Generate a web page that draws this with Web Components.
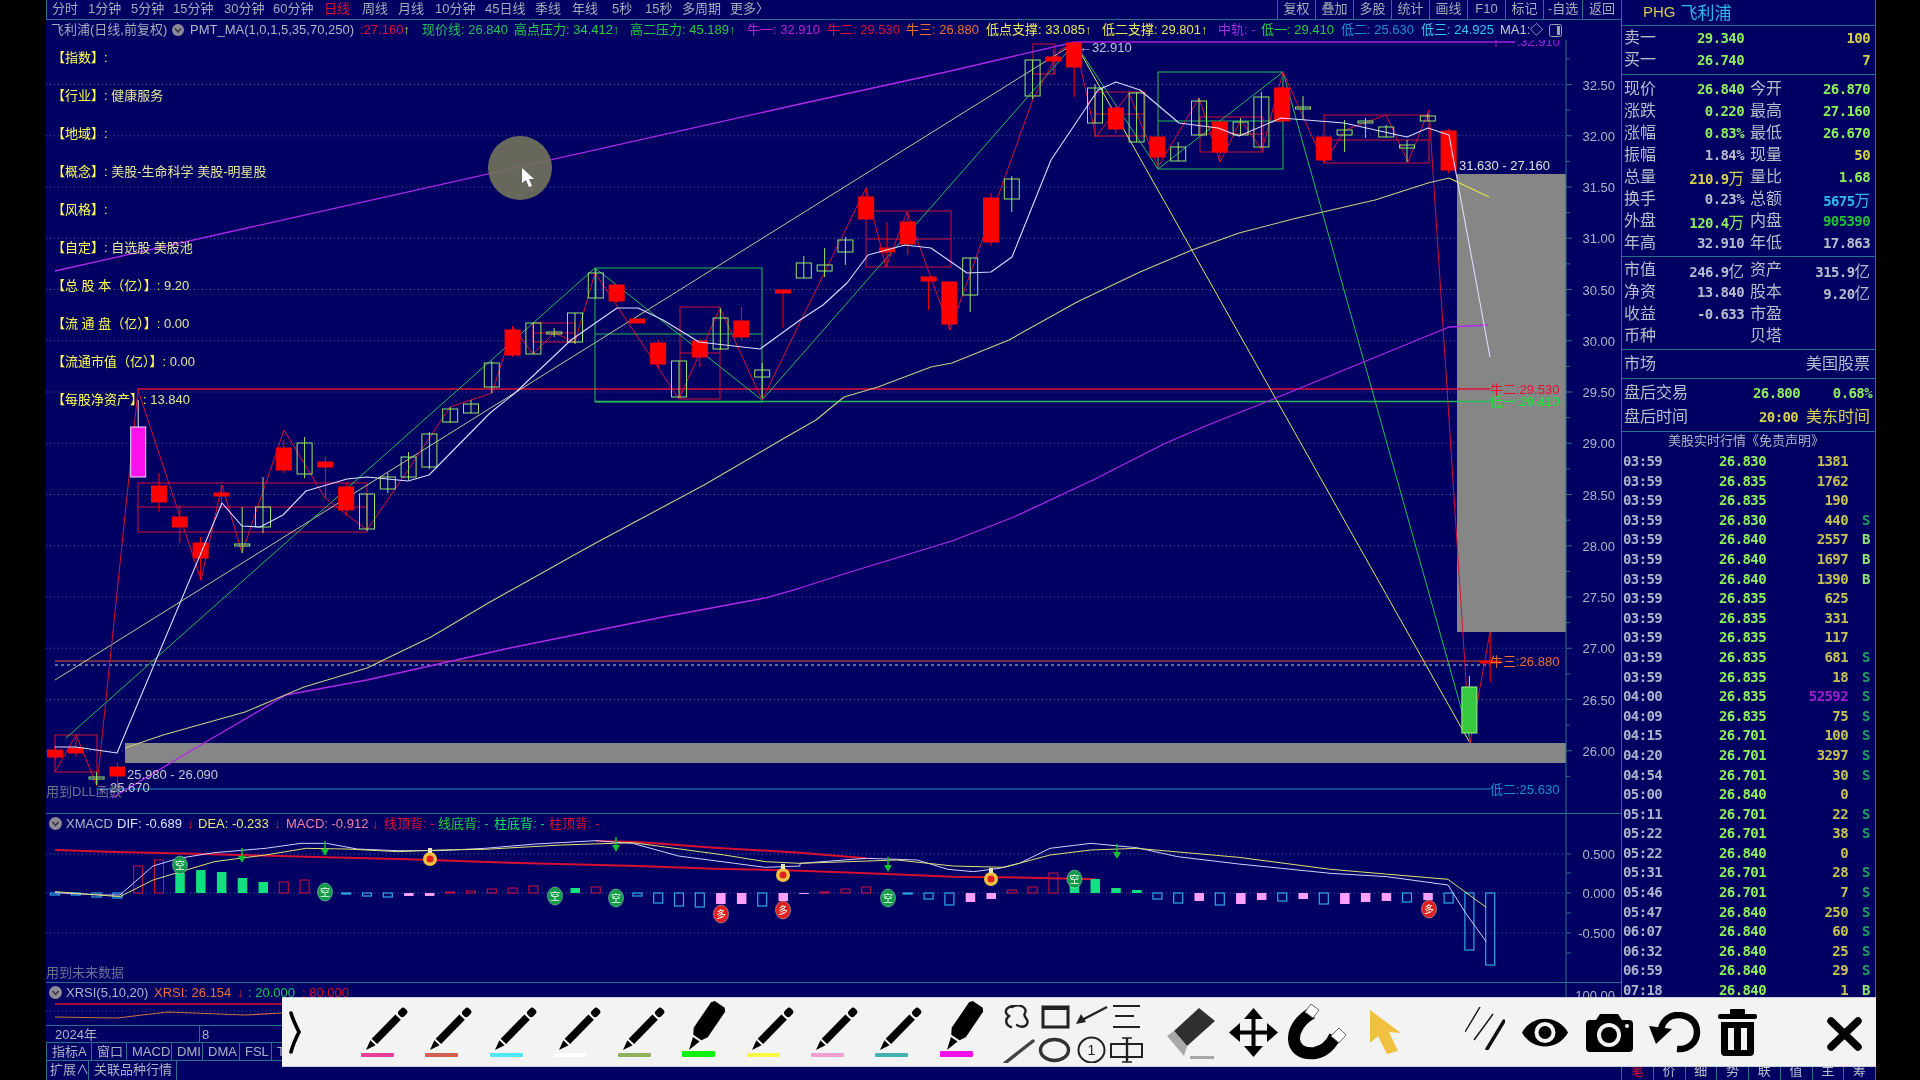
<!DOCTYPE html>
<html lang="zh">
<head>
<meta charset="utf-8">
<title>PHG</title>
<style>
  html, body { margin: 0; background: #000; overflow: hidden; }
</style>
</head>
<body>
<stock-app></stock-app>

<script>
const NAVY = '#000062';
const LINE = '#2c6e8e';
const UI_FONT = '"Liberation Sans", "Noto Sans CJK SC", sans-serif';
const NUM_FONT = '"DejaVu Sans Mono", "Noto Sans CJK SC", monospace';

// chart helpers, everything is in page coordinates
const priceY = p => 84.5 + (32.5 - p) * 102.5;
const candleX = i => 55 + 20.8 * i;
const line = (pts, color, w = 1) =>
  `<polyline fill="none" stroke="${color}" stroke-width="${w}" stroke-linejoin="round" points="${pts.map(p => p.join(',')).join(' ')}"/>`;
const box = (x1, y1, x2, y2, color, mid) =>
  `<rect x="${x1}" y="${y1}" width="${x2 - x1}" height="${y2 - y1}" fill="none" stroke="${color}"/>` +
  (mid ? `<line x1="${x1}" x2="${x2}" y1="${mid}" y2="${mid}" stroke="${color}"/>` : '');
const label = (x, y, text, color, anchor = 'start', size = 13) =>
  `<text x="${x}" y="${y}" fill="${color}" text-anchor="${anchor}" font-size="${size}">${text}</text>`;
const dotted = (y, x2 = 1566) =>
  `<line x1="46" x2="${x2}" y1="${y}" y2="${y}" stroke="#46609c" stroke-dasharray="1 3"/>`;

class BarItem extends HTMLElement {
  constructor() {
    super();
    this.attachShadow({ mode: 'open' }).innerHTML = `
      <style>
        :host { display: block; flex: 0 0 auto; white-space: nowrap; box-sizing: border-box; }
        :host([btn]) { border-left: 1px solid ${LINE}; text-align: center; height: 19px; }
        :host([tab]) { border-right: 1px solid ${LINE}; padding-left: 5px; overflow: hidden; }
      </style>
      <slot></slot>`;
  }
  connectedCallback() {
    if (this.hasAttribute('w')) this.style.width = this.getAttribute('w') + 'px';
  }
}
customElements.define('bar-item', BarItem);

class TopBar extends HTMLElement {
  constructor() {
    super();
    const left = [['分时', 36], ['1分钟', 43], ['5分钟', 42], ['15分钟', 51], ['30分钟', 49], ['60分钟', 51],
      ['日线', 38, '#e01030'], ['周线', 36], ['月线', 37], ['10分钟', 50], ['45日线', 50], ['季线', 37],
      ['年线', 40], ['5秒', 33], ['15秒', 37], ['多周期', 48], ['更多〉', 60]];
    const right = [['复权', 38], ['叠加', 38], ['多股', 38], ['统计', 38], ['画线', 38], ['F10', 38], ['标记', 38], ['-自选', 39], ['返回', 39]];
    this.attachShadow({ mode: 'open' }).innerHTML = `
      <style>
        :host { display: flex; height: 20px; box-sizing: border-box; padding-left: 5px; line-height: 18px;
                border-bottom: 1px solid ${LINE}; border-left: 1px solid ${LINE}; color: #a9a9bc; }
        .right { display: flex; margin-left: auto; }
      </style>
      ${left.map(([t, w, c]) => `<bar-item w="${w}"${c ? ` style="color:${c}"` : ''}>${t}</bar-item>`).join('')}
      <div class="right">${right.map(([t, w]) => `<bar-item btn w="${w}">${t}</bar-item>`).join('')}</div>`;
  }
}
customElements.define('top-bar', TopBar);

class LegendBar extends HTMLElement {
  constructor() {
    super();
    const items = [
      ['飞利浦(日线,前复权)', 121, '#a9a9bc'], ['@', 18], ['PMT_MA(1,0,1,5,35,70,250)', 170, '#b4b4c8'],
      [':27.160<b>↑</b>', 62, '#e01030'], ['现价线: 26.840', 92, '#20c060'], ['高点压力: 34.412↑', 116, '#22cc44'],
      ['高二压力: 45.189↑', 117, '#22cc44'], ['牛一: 32.910', 80, '#c020d0'], ['牛二: 29.530', 79, '#e01030'],
      ['牛三: 26.880', 80, '#e87030'], ['低点支撑: 33.085↑', 116, '#e8e850'], ['低二支撑: 29.801↑', 116, '#e8e850'],
      ['中轨: -', 43, '#a030e0'], ['低一: 29.410', 80, '#20d040'], ['低二: 25.630', 80, '#1890d0'],
      ['低三: 24.925', 79, '#30c8f0'], ['MA1:', 30, '#c8c8d8'], ['◇', 19, '#b4b4c8'], ['#', 14]
    ];
    this.attachShadow({ mode: 'open' }).innerHTML = `
      <style>
        :host { display: flex; height: 20px; padding-left: 5px; line-height: 20px; align-items: center; }
        b { font-weight: normal; color: #d8f040; }
        svg { display: block; }
      </style>
      ${items.map(([t, w, c]) => {
        if (t === '@') return `<bar-item w="${w}"><svg width="12" height="12" viewBox="0 0 12 12"><circle cx="6" cy="6" r="6" fill="#8a8a98"/><path d="M3 4.5 6 8 9 4.5" fill="none" stroke="#333" stroke-width="1.4"/></svg></bar-item>`;
        if (t === '#') return `<bar-item w="${w}"><svg width="13" height="13" viewBox="0 0 13 13"><rect x=".5" y=".5" width="12" height="12" rx="2" fill="none" stroke="#a0a0b0"/><rect x="8" y="2" width="3" height="9" fill="#a0a0b0"/></svg></bar-item>`;
        return `<bar-item w="${w}" style="color:${c}">${t}</bar-item>`;
      }).join('')}`;
  }
}
customElements.define('legend-bar', LegendBar);

class StockInfo extends HTMLElement {
  constructor() {
    super();
    const rows = [
      ['【指数】', ':'], ['【行业】', ': <i>健康服务</i>'], ['【地域】', ':'], ['【概念】', ': <i>美股-生命科学 美股-明星股</i>'],
      ['【风格】', ':'], ['【自定】', ': <i>自选股 美股池</i>'], ['【总 股 本（亿）】', ': <i>9.20</i>'],
      ['【流 通 盘（亿）】', ': <i>0.00</i>'], ['【流通市值（亿）】', ': <i>0.00</i>'], ['【每股净资产】', ': <i>13.840</i>']
    ];
    this.attachShadow({ mode: 'open' }).innerHTML = `
      <style>
        :host { position: absolute; left: 6px; top: -1px; display: flex; flex-direction: column; color: #ffff50; }
        div { height: 38px; line-height: 38px; white-space: pre; }
        i { font-style: normal; color: #e4e49a; }
      </style>
      ${rows.map(([a, b]) => `<div>${a}${b}</div>`).join('')}`;
  }
}
customElements.define('stock-info', StockInfo);

class KlinePane extends HTMLElement {
  constructor() {
    super();
    // [index, kind, top, bottom, high, low]   r red, g hollow, m magenta, f filled green
    const candles = [
      [0,'r',750,757,746,760],[1,'r',748,753,738,757],[2,'g',777,779,772,785],[3,'r',767,776,763,787],[4,'m',427,477,400,477],
      [5,'r',486,502,473,512],[6,'r',517,527,505,543],[7,'r',543,558,537,580],[8,'r',493,496,485,507],[9,'g',544,546,507,553],
      [10,'g',507,527,477,533],[11,'r',448,470,440,473],[12,'g',443,474,437,478],[13,'r',462,467,457,498],[14,'r',487,510,483,516],
      [15,'g',494,529,494,531],[16,'g',477,489,473,493],[17,'g',457,477,452,480],[18,'g',434,467,432,469],[19,'g',409,422,407,423],
      [20,'g',404,413,400,413],[21,'g',363,387,361,393],[22,'r',330,355,326,357],[23,'g',323,354,323,354],[24,'g',332,334,328,337],
      [25,'g',313,342,313,344],[26,'g',273,298,269,298],[27,'r',285,301,285,303],[28,'r',319,323,319,323],[29,'r',343,364,340,368],
      [30,'g',361,397,361,397],[31,'r',341,357,338,367],[32,'g',318,349,308,350],[33,'r',321,337,307,340],[34,'g',370,377,363,398],
      [35,'r',290,293,289,328],[36,'g',263,278,256,278],[37,'g',265,271,248,277],[38,'g',240,252,237,265],[39,'r',197,219,188,220],
      [40,'r',248,252,222,267],[41,'r',222,244,212,255],[42,'r',277,281,277,310],[43,'r',282,324,282,330],[44,'g',258,295,258,312],
      [45,'r',198,242,193,246],[46,'g',179,199,176,212],[47,'g',60,96,60,99],[48,'r',57,61,50,74],[49,'r',43,67,42,97],
      [50,'g',88,123,84,123],[51,'r',108,129,105,134],[52,'g',93,142,92,142],[53,'r',137,157,137,159],[54,'g',147,161,142,161],
      [55,'g',101,135,98,135],[56,'r',122,152,122,162],[57,'g',122,135,118,135],[58,'g',97,147,92,147],[59,'r',88,121,86,121],
      [60,'g',107,109,96,120],[61,'r',137,160,137,163],[62,'g',130,135,120,152],[63,'g',121,123,118,138],[64,'g',127,137,125,137],
      [65,'g',145,148,140,162],[66,'g',116,121,114,121],[67,'r',131,170,129,173],[68,'f',687,733,676,733],[69,'r',661,663,632,682]
    ];
    const bars = candles.map(([i, kind, top, bot, hi, lo]) => {
      const x = candleX(i);
      const color = { r: '#ff0000', g: '#98e868', m: '#e8e8f0', f: '#a0f090' }[kind];
      const fill = { r: '#ff0000', g: 'none', m: '#ff10ee', f: '#38c840' }[kind];
      const hw = i === 69 ? 10 : 7.5;
      return `<line x1="${x}" x2="${x}" y1="${hi}" y2="${lo}" stroke="${color}"/>` +
        `<rect x="${x - hw}" y="${top}" width="${hw * 2}" height="${bot - top}" fill="${fill}" stroke="${color}"/>`;
    }).join('');

    let grid = '';
    for (let p = 26; p <= 32.5; p += 0.5) grid += dotted(priceY(p));
    let axis = `<line x1="1566" x2="1566" y1="40" y2="813" stroke="${LINE}"/>`;
    for (let p = 25.75; p <= 32.75; p += 0.25) {
      axis += `<line x1="1566" x2="${p * 2 % 1 ? 1570 : 1572}" y1="${priceY(p)}" y2="${priceY(p)}" stroke="${LINE}"/>`;
    }
    for (let p = 26; p <= 32.5; p += 0.5) axis += label(1615, priceY(p) + 5, p.toFixed(2), '#b0b4c8', 'end');

    const redBoxes = [[55,735,97,772],[138,483,367,532,507],[533,323,575,342,333],[680,307,720,399,353],
      [866,211,951,267,239],[1033,44,1055,74],[1095,92,1145,136,114],[1200,117,1263,152,134],[1324,115,1429,163,140]];
    const red = '#d41038', green = '#24bc58';

    this.attachShadow({ mode: 'open' }).innerHTML = `
      <style>
        :host { display: block; position: relative; height: 773px; overflow: hidden; }
        svg { position: absolute; inset: 0; display: block; font-family: ${UI_FONT}; }
      </style>
      <svg width="1575" height="773" viewBox="46 40 1575 773">
        ${grid}
        <rect x="1457" y="174" width="109" height="458" fill="#868686"/>
        <rect x="125" y="743" width="1441" height="20" fill="#868686"/>
        ${axis}
        <line x1="137" x2="1490" y1="389" y2="389" stroke="#e01038" stroke-width="1.3"/>
        <line x1="595" x2="1490" y1="401.5" y2="401.5" stroke="${green}" stroke-width="1.3"/>
        <line x1="55" x2="1490" y1="661" y2="661" stroke="#e05a30"/>
        <line x1="55" x2="1490" y1="665" y2="665" stroke="#a0e8e0" stroke-dasharray="3 3"/>
        <line x1="97" x2="1490" y1="789" y2="789" stroke="#1e90d0" stroke-width="1.2"/>
        <line x1="1075" x2="1515" y1="42" y2="42" stroke="#a820e0" stroke-width="1.4"/>
        <line x1="1496" x2="1496" y1="40" y2="47" stroke="#a820e0"/>
        ${redBoxes.map(b => box(b[0], b[1], b[2], b[3], red, b[4])).join('')}
        ${box(595, 268, 762, 402, green, 334)}
        ${box(1158, 72, 1283, 169, green, 121)}
        ${line([[55,680],[1075,43]], '#c8c890')}
        ${line([[1075,43],[1470,743]], '#e4e460')}
        ${line([[66,738],[595,268],[762,400],[1075,43],[1158,169],[1283,72],[1470,740]], green)}
        ${line([[55,772],[76,735],[97,786],[138,390],[201,580],[222,485],[242,553],[284,430],[325,498],[367,530],[408,470],[450,407],[492,393],[513,327],[533,354],[554,333],[575,342],[595,273],[679,399],[720,308],[762,400],[866,188],[886,267],[907,212],[950,330],[1033,99],[1060,50],[1075,42],[1096,137],[1129,93],[1158,167],[1199,98],[1220,162],[1241,120],[1262,150],[1283,72],[1324,163],[1345,130],[1386,115],[1408,162],[1429,110],[1470,743],[1490,632]], red)}
        ${line([[55,271],[800,104],[946,72],[1075,42]], '#b028e8', 1.3)}
        ${line([[112,798],[204,743],[286,695],[367,680],[510,648],[663,617],[765,598],[800,588],[847,573],[952,541],[1014,517],[1093,480],[1166,443],[1208,425],[1271,400],[1449,327],[1488,325]], '#b028e8', 1.3)}
        ${line([[125,748],[163,735],[245,712],[304,687],[367,668],[431,637],[490,602],[592,545],[704,485],[781,440],[816,420],[844,397],[878,387],[931,367],[952,363],[1009,340],[1077,302],[1140,272],[1192,250],[1239,233],[1297,218],[1375,200],[1428,183],[1449,178]], '#cccc80', 1.1)}
        ${line([[1449,178],[1489,197]], '#e4e440', 1.1)}
        ${bars}
        ${line([[55,747],[76,747],[117,753],[222,503],[242,526],[260,527],[283,515],[306,491],[347,479],[367,477],[408,481],[429,475],[490,413],[515,393],[571,340],[617,308],[638,308],[663,320],[699,342],[760,349],[800,320],[823,305],[847,283],[868,255],[905,245],[931,248],[967,273],[991,272],[1012,257],[1051,160],[1098,90],[1116,82],[1140,90],[1179,123],[1218,128],[1239,136],[1281,118],[1344,123],[1407,137],[1428,128],[1449,135],[1490,357]], '#dcdcff', 1.1)}
        ${label(1079, 52, '←32.910', '#c0c0d0')}
        ${label(1459, 170, '31.630 - 27.160', '#e0e0e0')}
        ${label(127, 779, '25.980 - 26.090', '#c8c8d8')}
        ${label(97, 792, '←25.670', '#c8c8d8')}
        ${label(46, 796, '用到DLL函数', '#6c7090')}
        ${label(1560, 46, '.32.910', '#a820e0', 'end')}
        ${label(1490, 394, '牛二:29.530', '#e81030')}
        ${label(1490, 406, '低一:29.410', '#10f030')}
        ${label(1490, 666, '牛三:26.880', '#e87030')}
        ${label(1490, 794, '低二:25.630', '#1890d0')}
        <circle cx="520" cy="168" r="32" fill="#72725c" opacity=".9"/>
        <polygon points="522,168 522,183 526,180 529,187 532,186 529,179 534,179" fill="#fff"/>
      </svg>
      <stock-info></stock-info>`;
  }
}
customElements.define('kline-pane', KlinePane);

class PaneHeader extends HTMLElement {
  constructor() {
    super();
    this.attachShadow({ mode: 'open' }).innerHTML = `
      <style>
        :host { display: flex; position: relative; height: 19px; align-items: center; padding-left: 3px; line-height: 19px; }
        svg { display: block; margin-right: 4px; flex: none; }
      </style>
      <svg width="13" height="13" viewBox="0 0 13 13"><circle cx="6.5" cy="6.5" r="6.5" fill="#8a8a98"/><path d="M3.5 5 6.5 8.5 9.5 5" fill="none" stroke="#333" stroke-width="1.4"/></svg>
      <slot></slot>`;
  }
}
customElements.define('pane-header', PaneHeader);

class MacdPane extends HTMLElement {
  constructor() {
    super();
    const pts = (a, ox = 0) => a.map(([x, y]) => [x / 1.96 + ox, y / 3 + 780]);
    const seq = 'c2 c2 c4 c5 r27 r33 g20 g23 g21 g15 g11 r11 r13 - c1 c3 c4 p3 p3 r1 r2 r4 r5 r7 - g5 r6 - c3 c10 c13 c14 p11 p11 c13 p8 p1 r1 r4 r6 - c1 c6 c12 p9 p6 r3 r6 r20 g7 g14 g5 g3 c6 c10 p8 c12 p11 p7 c8 p6 c11 p11 p9 p8 c9 p7 c10 c57 c72'.split(' ');
    const zero = 893;
    const bars = seq.map((s, i) => {
      if (s === '-') return '';
      const kind = s[0], h = +s.slice(1), x = candleX(i) - 4.5;
      if (kind === 'g') return `<rect x="${x}" y="${zero - h}" width="9.5" height="${h}" fill="#10e080"/>`;
      if (kind === 'r') return `<rect x="${x}" y="${zero - h}" width="9" height="${h}" fill="none" stroke="#d01040"/>`;
      if (kind === 'p') return `<rect x="${x}" y="${zero}" width="9.5" height="${h}" fill="#ffa0ff"/>`;
      return `<rect x="${x}" y="${zero}" width="9" height="${h}" fill="none" stroke="#30a8e8" stroke-width="1.2"/>`;
    }).join('');

    const marker = (x, y, text, fill) =>
      `<ellipse cx="${x}" cy="${y}" rx="7.5" ry="9" fill="${fill}" stroke="#e8ffe8" stroke-width=".4"/>` +
      `<text x="${x}" y="${y + 3.5}" font-size="10" text-anchor="middle" fill="#f4fff4">${text}</text>`;
    const arrow = (x, y) =>
      `<line x1="${x}" x2="${x}" y1="${y - 7}" y2="${y + 4}" stroke="#10c030" stroke-width="1.5"/>` +
      `<polygon points="${x - 4},${y + 1} ${x + 4},${y + 1} ${x},${y + 8}" fill="#10c030"/>`;
    const bag = (x, y) =>
      `<ellipse cx="${x}" cy="${y + 2}" rx="7" ry="7" fill="#f0c040"/>` +
      `<rect x="${x - 2}" y="${y - 9}" width="4" height="5" fill="#e8e0c0"/>` +
      `<circle cx="${x}" cy="${y + 2}" r="3.5" fill="#e02020"/>`;

    this.attachShadow({ mode: 'open' }).innerHTML = `
      <style>
        :host { display: block; position: relative; height: 169px; box-sizing: border-box; border-top: 1px solid ${LINE}; overflow: hidden; }
        svg { position: absolute; inset: 0; display: block; font-family: ${UI_FONT}; }
        .tip { position: absolute; left: 0; bottom: 1px; color: #6c7090; }
      </style>
      <svg width="1575" height="168" viewBox="46 814 1575 168">
        ${dotted(854)}${dotted(893)}${dotted(933)}
        <line x1="1566" x2="1566" y1="814" y2="982" stroke="${LINE}"/>
        ${[854, 873, 893, 913, 933, 953].map(y => `<line x1="1566" x2="1571" y1="${y}" y2="${y}" stroke="${LINE}"/>`).join('')}
        ${label(1615, 859, '0.500', '#b0b4c8', 'end')}${label(1615, 898, '0.000', '#b0b4c8', 'end')}${label(1615, 938, '-0.500', '#b0b4c8', 'end')}
        ${line(pts([[108,210],[230,216],[400,222],[600,230],[800,238],[1000,248],[1250,258],[1400,266],[1568,272]]).concat(pts([[0,272],[170,282],[300,290],[450,293],[580,298]], 800)), '#d81030', 2)}
        ${line(pts([[1168,183],[1250,186],[1400,203],[1568,218]]).concat(pts([[0,218],[130,235]], 800)), '#d81030', 2)}
        ${bars}
        ${line(pts([[108,338],[200,345],[235,345],[300,258],[350,235],[420,218],[520,205],[590,190],[640,190],[700,207],[780,212],[860,212],[950,205],[1050,192],[1168,182],[1240,190],[1330,228],[1500,262],[1568,258]]).concat(pts([[0,250],[130,235],[230,240],[290,268],[340,275],[390,265],[430,250],[490,205],[570,190],[660,203],[740,230],[860,252],[1040,280],[1150,290],[1270,315],[1305,400],[1345,485]], 800)), '#d0d0ff', 1)}
        ${line(pts([[108,335],[235,350],[300,300],[420,245],[520,225],[600,205],[680,207],[780,215],[860,210],[950,208],[1100,195],[1240,188],[1420,225],[1500,245],[1568,250]]).concat(pts([[0,250],[190,240],[300,258],[400,262],[490,225],[570,210],[660,205],[860,232],[1040,268],[1270,298],[1345,382]], 800)), '#e0e070', 1)}
        ${[[242,855],[325,848],[616,844],[888,864],[1117,851]].map(a => arrow(a[0], a[1])).join('')}
        ${[[180,865],[325,892],[555,896],[616,898],[888,898],[1074.5,879]].map(m => marker(m[0], m[1], '空', '#109a4a')).join('')}
        ${[[721,914],[783,910],[1429,909]].map(m => marker(m[0], m[1], '多', '#e02020')).join('')}
        ${[[430,857],[783,873],[991,877]].map(m => bag(m[0], m[1])).join('')}
      </svg>
      <pane-header>
        <bar-item w="51" style="color:#b4b4c8">XMACD</bar-item>
        <bar-item w="70" style="color:#e0e0ff">DIF: -0.689</bar-item><bar-item w="11" style="color:#e02030">↓</bar-item>
        <bar-item w="76" style="color:#e8e870">DEA: -0.233</bar-item><bar-item w="12" style="color:#e02030">↓</bar-item>
        <bar-item w="86" style="color:#f080a8">MACD: -0.912</bar-item><bar-item w="12" style="color:#e02030">↓</bar-item>
        <bar-item w="54" style="color:#e01030">线顶背: -</bar-item><bar-item w="56" style="color:#20d040">线底背: -</bar-item>
        <bar-item w="55" style="color:#10e060">柱底背: -</bar-item><bar-item w="54" style="color:#e01030">柱顶背: -</bar-item>
      </pane-header>
      <div class="tip">用到未来数据</div>`;
  }
}
customElements.define('macd-pane', MacdPane);

class RsiPane extends HTMLElement {
  constructor() {
    super();
    this.attachShadow({ mode: 'open' }).innerHTML = `
      <style>
        :host { display: block; position: relative; height: 43px; box-sizing: border-box; border-top: 1px solid ${LINE}; overflow: hidden; }
        svg { position: absolute; inset: 0; display: block; font-family: ${UI_FONT}; }
      </style>
      <svg width="1575" height="42" viewBox="46 983 1575 42">
        <line x1="55" x2="1566" y1="1004" y2="1004" stroke="#d81030" stroke-width="1.3"/>
        ${line([[55,1017],[117,1018],[168,1012],[245,1015],[282,1013]], '#c87040', 1.2)}
        <line x1="46" x2="1566" y1="1011" y2="1011" stroke="#46609c" stroke-dasharray="1 3"/>
        <line x1="1566" x2="1566" y1="983" y2="1025" stroke="${LINE}"/>
        ${label(1615, 1000, '100.00', '#b0b4c8', 'end')}
      </svg>
      <pane-header>
        <bar-item w="88" style="color:#b4b4c8">XRSI(5,10,20)</bar-item>
        <bar-item w="83" style="color:#e87040">XRSI: 26.154</bar-item><bar-item w="11" style="color:#e02030">↓</bar-item>
        <bar-item w="54" style="color:#20c060">: 20.000</bar-item><bar-item style="color:#d01030">: 80.000</bar-item>
      </pane-header>`;
  }
}
customElements.define('rsi-pane', RsiPane);

class TabRow extends HTMLElement {
  constructor() {
    super();
    this.attachShadow({ mode: 'open' }).innerHTML = `
      <style>
        :host { display: flex; box-sizing: border-box; height: 18px; line-height: 17px; color: #b0b0c4;
                border-bottom: 1px solid ${LINE}; border-left: 1px solid ${LINE}; }
      </style>
      <slot></slot>`;
  }
}
customElements.define('tab-row', TabRow);

class QuotePanel extends HTMLElement {
  constructor() {
    super();
    const G = '#8cf05c', Y = '#d8d050', W = '#b8bccc', C = '#30b8f0', D = '#22c038';
    const unit = (v, u) => `${v}<u>${u}</u>`;
    const rows = list => list.map(([a, v, ac, b, w, bc]) => `<div class="row">
        <span class="lb">${a}</span><span class="val" style="color:${ac}">${v}</span>
        <span class="lb two">${b}</span><span class="val" style="color:${bc}">${w}</span></div>`).join('');
    const main = [
      ['现价', '26.840', G, '今开', '26.870', G], ['涨跌', '0.220', G, '最高', '27.160', G],
      ['涨幅', '0.83%', G, '最低', '26.670', G], ['振幅', '1.84%', W, '现量', '50', Y],
      ['总量', unit('210.9', '万'), Y, '量比', '1.68', G], ['换手', '0.23%', W, '总额', unit('5675', '万'), C],
      ['外盘', unit('120.4', '万'), G, '内盘', '905390', D], ['年高', '32.910', W, '年低', '17.863', W]
    ];
    const fund = [
      ['市值', unit('246.9', '亿'), W, '资产', unit('315.9', '亿'), W], ['净资', '13.840', W, '股本', unit('9.20', '亿'), W],
      ['收益', '-0.633', W, '市盈', '', W], ['币种', '', W, '贝塔', '', W]
    ];
    const tabs = ['笔', '价', '细', '势', '联', '值', '主', '筹'];
    this.attachShadow({ mode: 'open' }).innerHTML = `
      <style>
        :host { display: flex; flex-direction: column; height: 1080px; box-sizing: border-box; overflow: hidden;
                border-left: 1px solid ${LINE}; border-right: 1px solid ${LINE}; color: ${W}; }
        section { border-bottom: 1px solid ${LINE}; padding: 0 5px 0 2px; }
        .head { height: 25px; box-sizing: content-box; display: flex; align-items: center; padding: 0 0 3px 21px; height: 22px; font-size: 17px; gap: 5px; }
        .head b { color: #d8c850; font-weight: normal; font-size: 15px; font-family: ${UI_FONT}; }
        .head em { color: #30b8f0; font-style: normal; }
        .row { display: grid; grid-template-columns: 34px 86px 40px 86px; height: 22px; line-height: 22px; align-items: center; }
        .lb { font-size: 16px; white-space: nowrap; }
        .two { padding-left: 6px; }
        .val { font: bold 14px ${NUM_FONT}; letter-spacing: -.6px; text-align: right; white-space: nowrap; }
        u { text-decoration: none; font: 15.5px ${UI_FONT}; letter-spacing: 0; }
        .quote { height: 49px; padding-top: 1px; box-sizing: border-box; }
        .s2 { height: 182px; padding-top: 3px; box-sizing: border-box; }
        .s3 { height: 93px; padding-top: 2px; box-sizing: border-box; }
        .s4 { height: 29px; box-sizing: border-box; display: flex; justify-content: space-between; line-height: 28px; font-size: 16px; }
        .s5 { height: 53px; padding-top: 2px; box-sizing: border-box; }
        .s5 div { display: flex; height: 24px; line-height: 24px; font-size: 16px; position: relative; }
        .s5 .val { position: absolute; top: 0; line-height: 24px; }
        .cap { text-align: center; border: 0; line-height: 18px; height: 19px; color: #b0b0c4; padding-left: 0; flex: none; }
        trade-list { flex: 1; min-height: 0; }
        .tabs { display: flex; height: 18px; line-height: 18px; border-top: 1px solid ${LINE}; flex: none; margin-top: auto; }
        .tabs span { flex: 1; text-align: center; border-right: 1px solid ${LINE}; }
        .tabs span:last-child { border: 0; }
        .tabs span:first-child { color: #e01030; }
      </style>
      <section class="head"><b>PHG</b><em>飞利浦</em></section>
      <section class="quote">
        ${rows([['卖一', '29.340', G, '', '100', Y], ['买一', '26.740', G, '', '7', Y]])}
      </section>
      <section class="s2">${rows(main)}</section>
      <section class="s3">${rows(fund)}</section>
      <section class="s4"><span>市场</span><span>美国股票</span></section>
      <section class="s5">
        <div>盘后交易<span class="val" style="left:129px;color:${G}">26.800</span><span class="val" style="right:-2px;color:${G}">0.68%</span></div>
        <div>盘后时间<span class="val" style="left:135px;color:${Y}">20:00</span><span style="position:absolute;right:0;color:${Y}">美东时间</span></div>
      </section>
      <section class="cap">美股实时行情《免责声明》</section>
      <trade-list></trade-list>
      <div class="tabs">${tabs.map(t => `<span>${t}</span>`).join('')}</div>`;
  }
}
customElements.define('quote-panel', QuotePanel);

class TradeList extends HTMLElement {
  constructor() {
    super();
    const data = `03:59 26.830 1381,03:59 26.835 1762,03:59 26.835 190,03:59 26.830 440 S,03:59 26.840 2557 B,03:59 26.840 1697 B,03:59 26.840 1390 B,03:59 26.835 625,03:59 26.835 331,03:59 26.835 117,03:59 26.835 681 S,03:59 26.835 18 S,04:00 26.835 52592 S,04:09 26.835 75 S,04:15 26.701 100 S,04:20 26.701 3297 S,04:54 26.701 30 S,05:00 26.840 0,05:11 26.701 22 S,05:22 26.701 38 S,05:22 26.840 0,05:31 26.701 28 S,05:46 26.701 7 S,05:47 26.840 250 S,06:07 26.840 60 S,06:32 26.840 25 S,06:59 26.840 29 S,07:18 26.840 1 B`;
    this.attachShadow({ mode: 'open' }).innerHTML = `
      <style>
        :host { display: block; overflow: hidden; padding: 1px 0 0 1px; font: bold 14px ${NUM_FONT}; letter-spacing: -.6px; }
        .t { display: grid; grid-template-columns: 96px 60px 69px 1fr; height: 19.6px; line-height: 19.6px; }
        .time { color: #aeb2cc; }
        .price { color: #8cf05c; }
        .vol { color: #c8c050; text-align: right; }
        .big { color: #a020d0; }
        .S, .B { padding-left: 14px; }
        .S { color: #20a060; }
        .B { color: #90e870; }
      </style>
      ${data.split(',').map(line => {
        const [time, price, vol, flag = ''] = line.split(' ');
        return `<div class="t"><span class="time">${time}</span><span class="price">${price}</span>` +
          `<span class="vol${vol > 9999 ? ' big' : ''}">${vol}</span><span class="${flag}">${flag}</span></div>`;
      }).join('')}`;
  }
}
customElements.define('trade-list', TradeList);

class PenTool extends HTMLElement {
  constructor() {
    super();
    this.attachShadow({ mode: 'open' });
  }
  connectedCallback() {
    const color = this.getAttribute('color');
    const thick = this.hasAttribute('thick');
    const pen = thick
      ? `<g transform="translate(7 43) rotate(-56)"><polygon points="0,0 13,-4 13,4"/><polygon points="15,-5 21,-8.5 52,-8.5 55,-6 55,6 52,8.5 21,8.5 15,5"/></g>`
      : `<g transform="translate(5 43) rotate(-45.7)"><polygon points="0,0 10,-3.6 10,3.6"/><rect x="12" y="-3.8" width="34" height="7.6"/><rect x="48" y="-3.8" width="9" height="7.6" rx="3"/></g>`;
    this.shadowRoot.innerHTML = `
      <style>:host { display: block; flex: 0 0 64.3px; height: 50px; } svg { display: block; overflow: visible; }</style>
      <svg width="64" height="50" viewBox="0 0 64 50">
        ${pen}
        <rect x="0" y="${thick ? 44 : 46}" width="33" height="${thick ? 6 : 4}" rx="1" fill="${color}"/>
      </svg>`;
  }
}
customElements.define('pen-tool', PenTool);

class DrawToolbar extends HTMLElement {
  constructor() {
    super();
    const pens = ['#e8409a', '#d06050', '#50e8f0', '#ffffff', '#90b060', '#10f010', '#f8f840', '#f0a0d0', '#40b0b0', '#f010e8'];
    this.attachShadow({ mode: 'open' }).innerHTML = `
      <style>
        :host { position: absolute; left: 282px; top: 997px; width: 1594px; height: 70px; box-sizing: border-box;
                background: #f3f3f3; border-top: 1px solid #ccd; border-bottom: 1px solid #ccd;
                display: flex; align-items: center; font-family: ${UI_FONT}; }
        svg { display: block; flex: none; }
      </style>
      <svg style="margin-left:6px;margin-right:60px" width="13" height="43" viewBox="0 0 13 43"><path d="M3 2 C5 9 8 15 11 21 C8 27 5 33 3 41" fill="none" stroke="#000" stroke-width="3.6" stroke-linecap="round"/></svg>
      ${pens.map((c, i) => `<pen-tool color="${c}"${i === 5 || i === 9 ? ' thick' : ''}></pen-tool>`).join('')}
      <svg style="margin-left:-1px;margin-top:3px" width="140" height="58" viewBox="1003 1005 140 58" fill="none" stroke="#222" stroke-width="2.4">
        <path d="M1012 1006 C1005 1008 1004 1013 1009 1016 C1005 1019 1005 1025 1011 1027" stroke-linecap="round"/>
        <path d="M1012 1007 C1018 1003 1028 1007 1025 1013 C1022 1017 1030 1019 1027 1024 C1025 1028 1019 1027 1017 1025" stroke-linecap="round"/>
        <rect x="1043" y="1007" width="25" height="20" stroke-width="3"/><line x1="1042" x2="1069" y1="1008" y2="1008" stroke-width="4"/>
        <path d="M1107 1007 L1080 1021"/><polygon points="1076,1024 1081,1014 1086,1022" fill="#222" stroke="none"/>
        <path d="M1113 1006 H1140 M1115 1016 H1134 M1113 1027 H1140" stroke-width="2"/>
        <line x1="1005" x2="1033" y1="1063" y2="1041" stroke="#444" stroke-width="3.4" stroke-linecap="round"/>
        <ellipse cx="1054.5" cy="1050" rx="14" ry="10.5" stroke-width="3.4" stroke="#333"/>
        <ellipse cx="1091.5" cy="1050" rx="13" ry="12.5" stroke-width="2"/>
        <text x="1091.5" y="1055" font-size="14" text-anchor="middle" fill="#222" stroke="none">1</text>
        <rect x="1111" y="1044" width="31" height="13" stroke-width="2"/><line x1="1127" x2="1127" y1="1038" y2="1062" stroke-width="2.4"/>
        <path d="M1122 1038 H1132 M1122 1062 H1132" stroke-width="1.6"/>
      </svg>
      <svg style="margin-left:24px;margin-top:3px" width="48" height="52" viewBox="0 0 48 52">
        <polygon points="32,0 48,13 20,38 7,23" fill="#303030"/>
        <polygon points="0,28 7,23 20,38 17,48" fill="#a8a8a8"/>
        <rect x="23" y="48" width="24" height="3" fill="#a8a8a8"/>
      </svg>
      <svg style="margin-left:14px" width="49" height="49" viewBox="0 0 49 49">
        <path d="M24.5 6 V43 M6 24.5 H43" stroke="#000" stroke-width="4"/>
        <polygon points="24.5,0 15,11 34,11" /><polygon points="24.5,49 15,38 34,38"/>
        <polygon points="0,24.5 11,15 11,34"/><polygon points="49,24.5 38,15 38,34"/>
      </svg>
      <svg style="margin-left:7px" width="61" height="56" viewBox="0 0 61 56">
        <path d="M27 9 C3 22 2 52 30 49 C40 47 46 41 50 32" fill="none" stroke="#000" stroke-width="12"/>
        <polygon points="26,0 34,6 28,14 20,8" fill="#fff" stroke="#666"/>
        <polygon points="54,24 61,31 54,39 46,32" fill="#fff" stroke="#666"/>
      </svg>
      <svg style="margin-left:23px" width="32" height="44" viewBox="0 0 32 44"><polygon points="1,0 32,23 20,22 29,41 18,44 9,26 1,33" fill="#f0c040"/></svg>
      <svg style="margin-left:64px;margin-top:-8px" width="40" height="43" viewBox="0 0 40 43" stroke="#111">
        <line x1="15" y1="0" x2="0" y2="25" stroke-width="1.4"/><line x1="28" y1="7" x2="9" y2="33" stroke-width="1.4"/>
        <line x1="39" y1="14" x2="22" y2="42" stroke-width="3.4" stroke-linecap="round"/>
      </svg>
      <svg style="margin-left:17px" width="46" height="29" viewBox="0 0 46 29">
        <path d="M0 14.5 C10 -4 36 -4 46 14.5 C36 33 10 33 0 14.5 Z"/>
        <circle cx="23" cy="14.5" r="10.5" fill="#f3f3f3"/><circle cx="23" cy="14.5" r="6.5"/>
      </svg>
      <svg style="margin-left:18px;margin-top:2px" width="47" height="38" viewBox="0 0 47 38">
        <path d="M14 0 H32 L36 6 H43 Q47 6 47 10 V34 Q47 38 43 38 H4 Q0 38 0 34 V10 Q0 6 4 6 H10 Z"/>
        <circle cx="23" cy="21" r="12" fill="#f3f3f3"/><circle cx="23" cy="21" r="8"/>
        <circle cx="41" cy="12" r="2" fill="#f3f3f3"/>
      </svg>
      <svg style="margin-left:16px" width="52" height="41" viewBox="0 0 52 41">
        <path d="M28 37 C40 38 48 30 48 20 C48 9 39 3 29 3 C20 3 14 9 12 17" fill="none" stroke="#000" stroke-width="6.5"/>
        <polygon points="0,14 23,17 7,32"/>
      </svg>
      <svg style="margin-left:17px;margin-top:1px" width="39" height="47" viewBox="0 0 39 47">
        <rect x="0" y="5" width="39" height="5" rx="2"/><rect x="12" y="0" width="15" height="6" rx="1"/>
        <path d="M3 13 H36 V43 Q36 47 32 47 H7 Q3 47 3 43 Z"/>
        <rect x="10" y="19" width="6" height="22" fill="#f3f3f3"/><rect x="23" y="19" width="6" height="22" fill="#f3f3f3"/>
      </svg>
      <svg style="margin-left:69px;margin-top:4px" width="37" height="34" viewBox="0 0 37 34">
        <path d="M5 4 L32 30 M32 4 L5 30" stroke="#000" stroke-width="7.5" stroke-linecap="round"/>
      </svg>`;
  }
}
customElements.define('draw-toolbar', DrawToolbar);

class StockApp extends HTMLElement {
  constructor() {
    super();
    this.attachShadow({ mode: 'open' }).innerHTML = `
      <style>
        :host { display: block; position: relative; width: 1920px; height: 1080px; overflow: hidden; background: #000;
                font: 13px ${UI_FONT}; color: #b0b0c4; filter: blur(.4px); }
        .shell { display: grid; grid-template-columns: 1575px 255px; margin-left: 46px; width: 1830px; height: 1080px; background: ${NAVY}; }
        .main { display: flex; flex-direction: column; min-width: 0; height: 1080px; overflow: hidden; }
        .time { display: flex; box-sizing: border-box; height: 18px; line-height: 17px; border-top: 1px solid ${LINE}; border-bottom: 1px solid ${LINE}; padding-left: 9px; }
        .time span:first-child { width: 144px; border-right: 1px solid ${LINE}; }
        .time span:last-child { padding-left: 2px; }
      </style>
      <div class="shell">
        <div class="main">
          <top-bar></top-bar>
          <legend-bar></legend-bar>
          <kline-pane></kline-pane>
          <macd-pane></macd-pane>
          <rsi-pane></rsi-pane>
          <div class="time"><span>2024年</span><span>8</span></div>
          <tab-row>
            <bar-item tab w="45">指标A</bar-item><bar-item tab w="35">窗口</bar-item><bar-item tab w="45">MACD</bar-item>
            <bar-item tab w="31">DMI</bar-item><bar-item tab w="37">DMA</bar-item><bar-item tab w="32">FSL</bar-item><bar-item tab w="40">TWR</bar-item>
          </tab-row>
          <tab-row style="height:19px;border-bottom:0">
            <bar-item tab w="42" style="padding-left:3px">扩展∧</bar-item><bar-item tab w="88">关联品种行情</bar-item>
          </tab-row>
        </div>
        <quote-panel></quote-panel>
      </div>
      <draw-toolbar></draw-toolbar>`;
  }
}
customElements.define('stock-app', StockApp);
</script>
</body>
</html>
